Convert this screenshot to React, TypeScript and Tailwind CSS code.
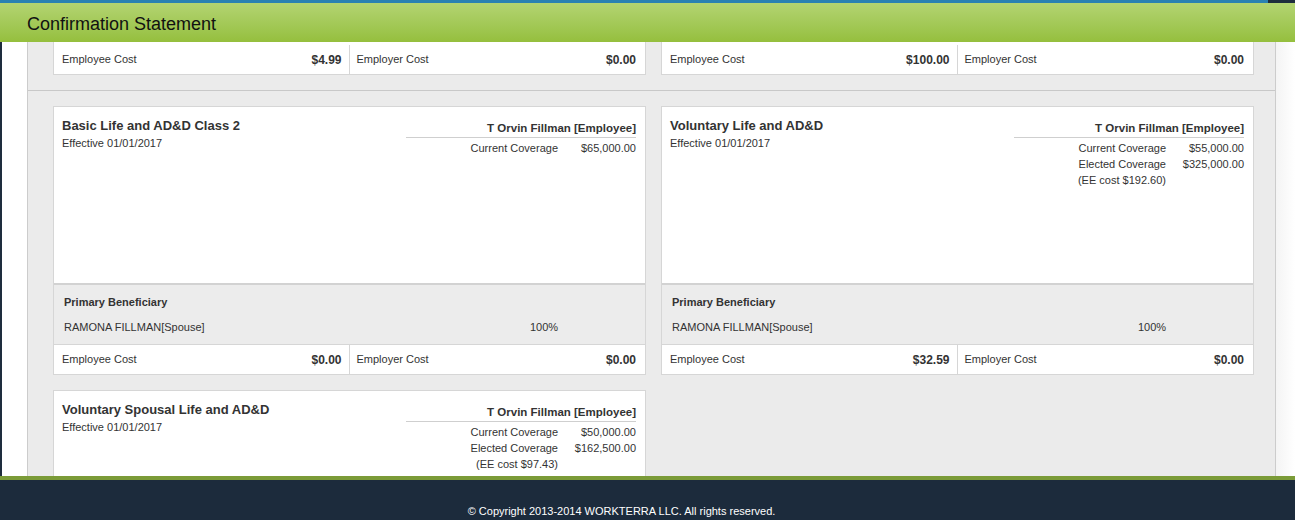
import React from "react";

type Row = { label: string; value: string };

interface CardProps {
  title: string;
  rows: Row[];
  eeCost?: string;
  beneficiary?: { name: string; pct: string };
  employee?: string;
  employer?: string;
}

function CostRow({ employee, employer, top = true, tall = false }: { employee: string; employer: string; top?: boolean; tall?: boolean }) {
  return (
    <div className={`flex bg-white text-[11px] text-[#333] ${tall ? "h-[32px] pt-[3px]" : "h-[30px]"} ${top ? "border-t border-[#d6d6d6]" : ""}`}>
      <div className="flex w-1/2 items-center justify-between border-r border-[#d6d6d6] pl-[8px] pr-[7px]">
        <span>Employee Cost</span>
        <span className="text-[12px] font-bold">{employee}</span>
      </div>
      <div className="flex w-1/2 items-center justify-between pl-[7px] pr-[9px]">
        <span>Employer Cost</span>
        <span className="text-[12px] font-bold">{employer}</span>
      </div>
    </div>
  );
}

function Card({ title, rows, eeCost, beneficiary, employee, employer }: CardProps) {
  return (
    <div className="border border-[#d6d6d6] bg-white">
      <div className="flex h-[176px] justify-between pl-[8px] pr-[9px] pt-[10px]">
        <div>
          <div className="text-[13px] font-bold leading-[18px] text-[#333]">{title}</div>
          <div className="text-[11px] leading-[16px] text-[#333]">Effective 01/01/2017</div>
        </div>
        <div className="mt-[3px] w-[230px] text-[11px] text-[#333]">
          <div className="h-[18px] border-b border-[#cfcfcf] text-right text-[11.5px] font-bold leading-[17px]">
            T Orvin Fillman [Employee]
          </div>
          <div className="pt-[2px]">
            {rows.map((r) => (
              <div key={r.label} className="flex leading-[16px]">
                <span className="w-[152px] text-right">{r.label}</span>
                <span className="flex-1 text-right">{r.value}</span>
              </div>
            ))}
            {eeCost && (
              <div className="flex leading-[16px]">
                <span className="w-[152px] text-right">(EE cost {eeCost})</span>
              </div>
            )}
          </div>
        </div>
      </div>
      {beneficiary && (
        <>
          <div className="h-[61px] border-t-2 border-[#d2d2d2] bg-[#ececec] px-[10px] pt-[9px] text-[11px] text-[#333]">
            <div className="font-bold leading-[16px]">Primary Beneficiary</div>
            <div className="mt-[9px] flex leading-[16px]">
              <span className="w-[466px]">{beneficiary.name}</span>
              <span>{beneficiary.pct}</span>
            </div>
          </div>
          <CostRow employee={employee ?? ""} employer={employer ?? ""} />
        </>
      )}
    </div>
  );
}

export default function App() {
  return (
    <div className="flex h-[520px] w-[1295px] flex-col overflow-hidden bg-white font-['Liberation_Sans',Arial,sans-serif]">
      <div className="flex h-[3px]">
        <div className="flex-1 bg-[#2a82b2]" />
        <div className="w-[27px] bg-[#1e2d3d]" />
      </div>
      <header className="flex h-[39px] items-center bg-gradient-to-b from-[#b3d471] to-[#95bf3d] pl-[27px] pt-[3px]">
        <h1 className="text-[18px] leading-[22px] text-[#111]">Confirmation Statement</h1>
      </header>

      <div className="flex min-h-0 flex-1">
        <div className="w-[2px] bg-[#1e2d3d]" />
        <div className="w-[25px]" />
        <main className="w-[1249px] overflow-hidden border-x border-[#cccccc] bg-[#ebebeb]">
          <div className="grid grid-cols-[593px_593px] gap-x-[15px] pl-[25px]">
            <div className="border border-t-0 border-[#d6d6d6]">
              <CostRow employee="$4.99" employer="$0.00" top={false} tall />
            </div>
            <div className="border border-t-0 border-[#d6d6d6]">
              <CostRow employee="$100.00" employer="$0.00" top={false} tall />
            </div>
          </div>

          <div className="mt-[15px] border-t border-[#c8c8c8]" />

          <div className="grid grid-cols-[593px_593px] gap-x-[15px] gap-y-[15px] pl-[25px] pt-[15px]">
            <Card
              title="Basic Life and AD&D Class 2"
              rows={[{ label: "Current Coverage", value: "$65,000.00" }]}
              beneficiary={{ name: "RAMONA FILLMAN[Spouse]", pct: "100%" }}
              employee="$0.00"
              employer="$0.00"
            />
            <Card
              title="Voluntary Life and AD&D"
              rows={[
                { label: "Current Coverage", value: "$55,000.00" },
                { label: "Elected Coverage", value: "$325,000.00" },
              ]}
              eeCost="$192.60"
              beneficiary={{ name: "RAMONA FILLMAN[Spouse]", pct: "100%" }}
              employee="$32.59"
              employer="$0.00"
            />
            <Card
              title="Voluntary Spousal Life and AD&D"
              rows={[
                { label: "Current Coverage", value: "$50,000.00" },
                { label: "Elected Coverage", value: "$162,500.00" },
              ]}
              eeCost="$97.43"
            />
          </div>
        </main>
        <div className="flex-1 bg-gradient-to-r from-[#f4f4f4] to-white" />
      </div>

      <footer className="h-[44px] shrink-0 border-t-4 border-[#7b9b38] bg-[#1c2b3c] pr-[52px] pt-[24px] text-center text-[11px] leading-[14px] text-white">
        © Copyright 2013-2014 WORKTERRA LLC. All rights reserved.
      </footer>
    </div>
  );
}
